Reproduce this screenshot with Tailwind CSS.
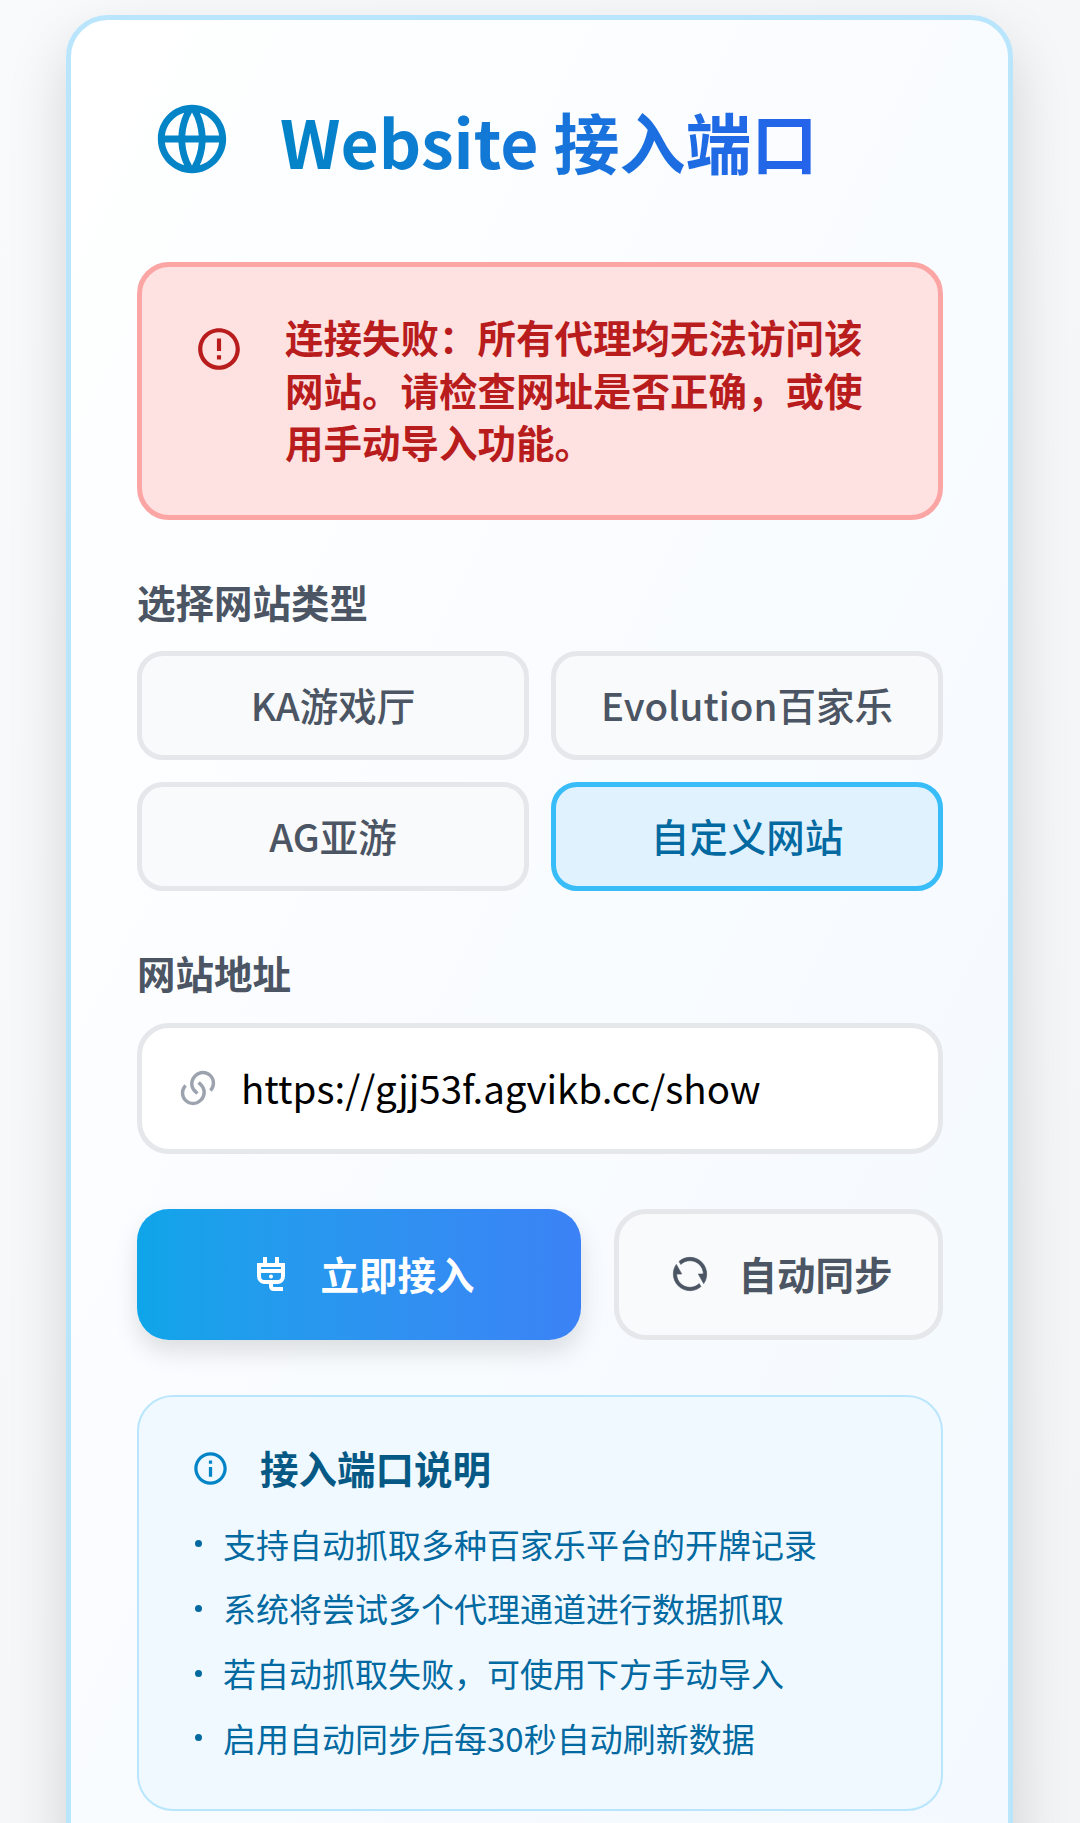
<!DOCTYPE html>
<html lang="zh-CN">
  <head>
    <meta charset="UTF-8" />
    <meta name="viewport" content="width=device-width, initial-scale=1.0" />
    <script src="https://cdn.jsdelivr.net/npm/@tailwindcss/browser@4"></script>
    <title>Website 接入端口</title>
  </head>
  <body class="h-[1823px] overflow-hidden bg-gradient-to-br from-[#f9fafb] to-[#f3f4f6] font-['Noto_Sans_CJK_SC','Noto_Sans',sans-serif]">
    <div class="pt-[15px] pl-[66px]">
      <div class="w-[947px] rounded-[42px] border-[5px] border-[#bae6fd] bg-gradient-to-br from-white to-[#f3f9ff] pt-[77px] pr-[65px] pb-[60px] pl-[66px] shadow-[0_25px_60px_rgba(0,0,0,0.15)]">
        <!-- header -->
        <div class="flex items-center pl-[14px]">
          <svg class="h-[82px] w-[82px] shrink-0 fill-[#0284c7]" viewBox="0 0 24 24">
            <path d="M12 22C6.47715 22 2 17.5228 2 12C2 6.47715 6.47715 2 12 2C17.5228 2 22 6.47715 22 12C22 17.5228 17.5228 22 12 22ZM9.71002 19.6674C8.74743 17.6259 8.15732 15.3742 8.02731 13H4.06189C4.458 16.1765 6.71639 18.7747 9.71002 19.6674ZM10.0307 13C10.1811 15.4388 10.8778 17.7297 12 19.752C13.1222 17.7297 13.8189 15.4388 13.9693 13H10.0307ZM19.9381 13H15.9727C15.8427 15.3742 15.2526 17.6259 14.29 19.6674C17.2836 18.7747 19.542 16.1765 19.9381 13ZM4.06189 11H8.02731C8.15732 8.62577 8.74743 6.37407 9.71002 4.33256C6.71639 5.22533 4.458 7.8235 4.06189 11ZM10.0307 11H13.9693C13.8189 8.56122 13.1222 6.27025 12 4.24799C10.8778 6.27025 10.1811 8.56122 10.0307 11ZM14.29 4.33256C15.2526 6.37407 15.8427 8.62577 15.9727 11H19.9381C19.542 7.8235 17.2836 5.22533 14.29 4.33256Z" />
          </svg>
          <h1 class="mt-[2px] ml-[47px] bg-gradient-to-r from-[#0284c7] to-[#2563eb] bg-clip-text text-[66px] leading-[82px] font-bold whitespace-nowrap text-transparent">Website 接入端口</h1>
        </div>

        <!-- error -->
        <div class="mt-[81px] flex rounded-[32px] border-[5px] border-[#fca5a5] bg-[#fee2e2] pt-[43px] pr-[60px] pb-[47px] pl-[52px]">
          <svg class="mt-[14px] h-[50px] w-[50px] shrink-0 fill-[#b91c1c]" viewBox="0 0 24 24">
            <path d="M12 22C6.47715 22 2 17.5228 2 12C2 6.47715 6.47715 2 12 2C17.5228 2 22 6.47715 22 12C22 17.5228 17.5228 22 12 22ZM12 20C16.4183 20 20 16.4183 20 12C20 7.58172 16.4183 4 12 4C7.58172 4 4 7.58172 4 12C4 16.4183 7.58172 20 12 20ZM11 15H13V17H11V15ZM11 7H13V13H11V7Z" />
          </svg>
          <p class="ml-[41px] text-[38.5px] leading-[52.5px] font-bold text-[#b91c1c]">连接失败：所有代理均无法访问该网站。请检查网址是否正确，或使用手动导入功能。</p>
        </div>

        <!-- site type -->
        <div class="mt-[55px] text-[38.5px] leading-[52px] font-bold text-[#4b5563]">选择网站类型</div>
        <div class="mt-[24px] grid grid-cols-2 gap-[22px]">
          <button class="h-[109px] rounded-[26px] border-[5px] border-[#e5e7eb] bg-[#f9fafb] text-[38.5px] font-medium text-[#4b5563]">KA游戏厅</button>
          <button class="h-[109px] rounded-[26px] border-[5px] border-[#e5e7eb] bg-[#f9fafb] text-[38.5px] font-medium text-[#4b5563]">Evolution百家乐</button>
          <button class="h-[109px] rounded-[26px] border-[5px] border-[#e5e7eb] bg-[#f9fafb] text-[38.5px] font-medium text-[#4b5563]">AG亚游</button>
          <button class="h-[109px] rounded-[26px] border-[5px] border-[#38bdf8] bg-[#e0f2fe] text-[38.5px] font-medium text-[#0369a1]">自定义网站</button>
        </div>

        <!-- url -->
        <div class="mt-[55px] text-[38.5px] leading-[52px] font-bold text-[#4b5563]">网站地址</div>
        <div class="mt-[25px] flex h-[131px] items-center rounded-[32px] border-[5px] border-[#e5e7eb] bg-white pl-[35px]">
          <svg class="h-[42px] w-[42px] shrink-0 fill-[#9ca3af]" viewBox="0 0 24 24">
            <path d="M13.0607 8.11097L14.4749 9.52518C17.2086 12.2589 17.2086 16.691 14.4749 19.4247L14.1214 19.7782C11.3877 22.5119 6.95555 22.5119 4.22188 19.7782C1.48821 17.0446 1.48821 12.6124 4.22188 9.87874L5.6361 11.293C3.68348 13.2456 3.68348 16.4114 5.6361 18.364C7.58872 20.3166 10.7545 20.3166 12.7072 18.364L13.0607 18.0105C15.0133 16.0578 15.0133 12.892 13.0607 10.9394L11.6465 9.52518L13.0607 8.11097ZM19.7782 14.1214L18.364 12.7072C20.3166 10.7545 20.3166 7.58872 18.364 5.6361C16.4114 3.68348 13.2456 3.68348 11.293 5.6361L10.9394 5.98965C8.98678 7.94227 8.98678 11.1081 10.9394 13.0607L12.3536 14.4749L10.9394 15.8891L9.52518 14.4749C6.79151 11.7413 6.79151 7.30911 9.52518 4.57544L9.87874 4.22188C12.6124 1.48821 17.0446 1.48821 19.7782 4.22188C22.5119 6.95555 22.5119 11.3877 19.7782 14.1214Z" />
          </svg>
          <span class="ml-[22px] text-[38.5px] text-black">https://gjj53f.agvikb.cc/show</span>
        </div>

        <!-- actions -->
        <div class="mt-[55px] flex gap-[33px]">
          <button class="flex h-[131px] w-[444px] items-center justify-center rounded-[32px] bg-gradient-to-r from-[#0ea5e9] to-[#3b82f6] text-[38.5px] font-bold text-white shadow-[0_12px_24px_rgba(0,0,0,0.12)]">
            <svg class="mr-[35px] ml-[14px] h-[34px] w-[28px] shrink-0 fill-none stroke-white stroke-4" viewBox="0 0 28 34">
              <path d="M8 0V8M20 0V8M2 8H26V19C26 22 24 25 21 25H7C4 25 2 22 2 19ZM2 14H26M14 25V29C14 31 15 32 17 32H26" />
              <circle class="fill-white stroke-none" cx="14" cy="19.5" r="2" />
            </svg>
            立即接入
          </button>
          <button class="flex h-[131px] flex-1 items-center justify-center rounded-[32px] border-[5px] border-[#e5e7eb] bg-[#f9fafb] text-[38.5px] font-bold text-[#4b5563]">
            <svg class="mr-[28px] ml-[6px] h-[40px] w-[40px] shrink-0 fill-[#4b5563] stroke-[#4b5563] stroke-[0.4]" viewBox="0 0 24 24">
              <path d="M5.46257 4.43262C7.21556 2.91688 9.5007 2 12 2C17.5228 2 22 6.47715 22 12C22 14.1361 21.3302 16.1158 20.1892 17.7406L17 12H20C20 7.58172 16.4183 4 12 4C9.84982 4 7.89777 4.84827 6.46023 6.22842L5.46257 4.43262ZM18.5374 19.5674C16.7844 21.0831 14.4993 22 12 22C6.47715 22 2 17.5228 2 12C2 9.86386 2.66979 7.88416 3.8108 6.25944L7 12H4C4 16.4183 7.58172 20 12 20C14.1502 20 16.1022 19.1517 17.5398 17.7716L18.5374 19.5674Z" />
            </svg>
            自动同步
          </button>
        </div>

        <!-- notes -->
        <div class="mt-[55px] rounded-[36px] border-[2.6px] border-[#bae6fd] bg-[#f0f9ff] pt-[44px] pr-[40px] pb-[39px] pl-[51px]">
          <div class="flex items-center">
            <svg class="mt-[4px] ml-[1px] h-[39px] w-[39px] shrink-0 fill-[#0284c7]" viewBox="0 0 24 24">
              <path d="M12 22C6.47715 22 2 17.5228 2 12C2 6.47715 6.47715 2 12 2C17.5228 2 22 6.47715 22 12C22 17.5228 17.5228 22 12 22ZM12 20C16.4183 20 20 16.4183 20 12C20 7.58172 16.4183 4 12 4C7.58172 4 4 7.58172 4 12C4 16.4183 7.58172 20 12 20ZM11 7H13V9H11V7ZM11 11H13V17H11V11Z" />
            </svg>
            <h2 class="ml-[30px] text-[38.5px] leading-[52px] font-bold text-[#075985]">接入端口说明</h2>
          </div>
          <ul class="mt-[19px] text-[33px] leading-[64.7px] text-[#0369a1]">
            <li class="flex items-center"><span class="mr-[21px] ml-[5px] h-[7px] w-[7px] rounded-full bg-[#0369a1]"></span>支持自动抓取多种百家乐平台的开牌记录</li>
            <li class="flex items-center"><span class="mr-[21px] ml-[5px] h-[7px] w-[7px] rounded-full bg-[#0369a1]"></span>系统将尝试多个代理通道进行数据抓取</li>
            <li class="flex items-center"><span class="mr-[21px] ml-[5px] h-[7px] w-[7px] rounded-full bg-[#0369a1]"></span>若自动抓取失败，可使用下方手动导入</li>
            <li class="flex items-center"><span class="mr-[21px] ml-[5px] h-[7px] w-[7px] rounded-full bg-[#0369a1]"></span>启用自动同步后每30秒自动刷新数据</li>
          </ul>
        </div>
      </div>
    </div>
  </body>
</html>
